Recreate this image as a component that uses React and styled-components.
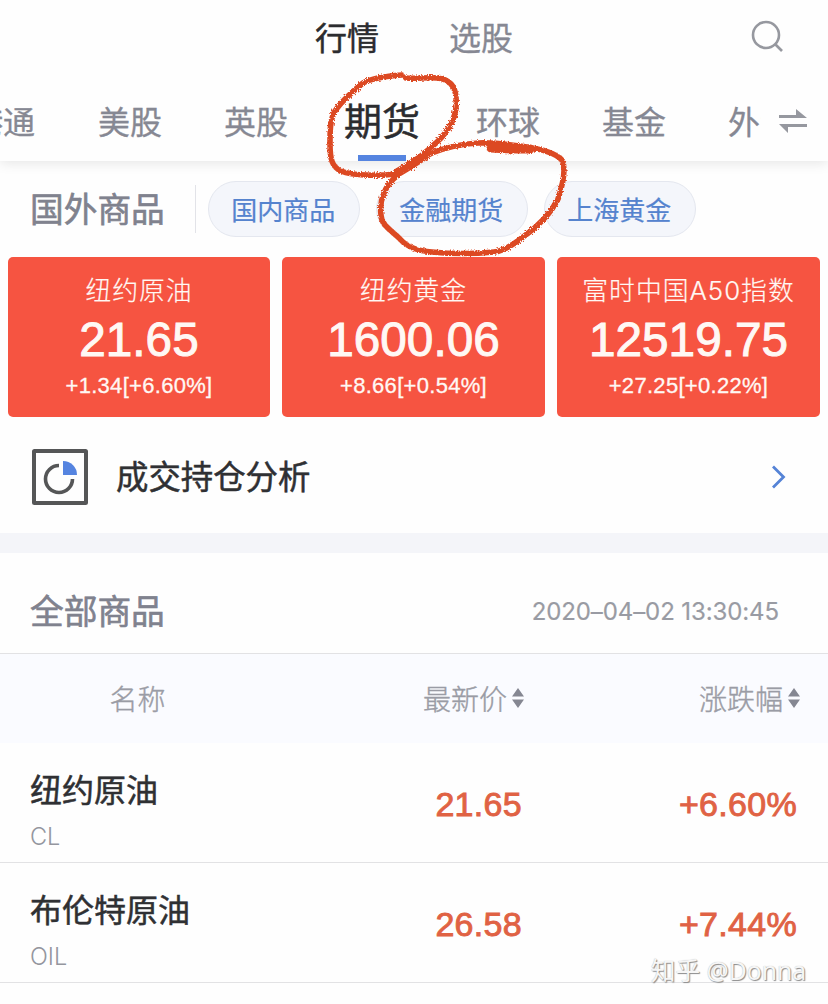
import React from "react"
import styled, { createGlobalStyle } from "styled-components"

const GlobalStyle = createGlobalStyle`
  body {
    margin: 0;
    background: #fefefe;
    overflow: hidden;
  }

  * {
    box-sizing: border-box;
  }
`

const Page = styled.div`
  position: relative;
  width: 828px;
  height: 1004px;
  overflow: hidden;
  background: #fefefe;
  color: #2f3033;
  font-family: "Noto Sans CJK SC", sans-serif;
  white-space: nowrap;
`

const TopBar = styled.header`
  height: 76px;
  display: grid;
  grid-template-columns: 1fr auto 1fr;
  align-items: center;
`

const Switcher = styled.nav`
  grid-column: 2;
  display: flex;
  gap: 70px;
  margin-top: -4px;
`

const SwitchItem = styled.span`
  font-size: 32px;
  line-height: 48px;
  -webkit-text-stroke: ${(p) => (p.$active ? "0.5px" : "0.3px")} currentColor;
  color: ${(p) => (p.$active ? "#2b2c2f" : "#868893")};
`

const SearchIcon = styled.svg`
  justify-self: end;
  margin-right: 44px;
  margin-top: -4px;
`

const TabBar = styled.nav`
  height: 85px;
  display: flex;
  align-items: center;
  box-shadow: 0 2px 12px rgba(0, 0, 0, 0.1);
  clip-path: inset(0 0 -20px 0);
`

const TabList = styled.div`
  flex: none;
  width: 761px;
  height: 85px;
  display: flex;
  overflow: hidden;
`

const Tab = styled.div`
  flex: none;
  width: 126px;
  height: 85px;
  display: flex;
  flex-direction: column;
  align-items: center;
  justify-content: space-between;
  margin-left: ${(p) => (p.$first ? "-59px" : "0")};
  padding-right: ${(p) => (p.$first ? "2px" : "0")};
  font-size: ${(p) => (p.$active ? "38px" : "32px")};
  line-height: ${(p) => (p.$active ? "86px" : "88px")};
  -webkit-text-stroke: ${(p) => (p.$active ? "0.5px" : "0.3px")} currentColor;
  color: ${(p) => (p.$active ? "#2b2c2f" : "#868893")};
`

const Underline = styled.div`
  flex: none;
  width: 48px;
  height: 6px;
  margin-top: -7px;
  background: #5584e0;
`

const SwapIcon = styled.svg`
  margin: 5px 0 0 17px;
`

const Categories = styled.section`
  height: 96px;
  display: flex;
  align-items: center;
  padding: 0 0 0 30px;
`

const SectionTitle = styled.h2`
  margin: -2px 0 0;
  font-size: 33.7px;
  line-height: 50px;
  font-weight: 400;
  color: #80828e;
  -webkit-text-stroke: 0.6px currentColor;
`

const Divider = styled.div`
  width: 1px;
  height: 48px;
  margin: 0 12px 0 30px;
  background: #e2e3e8;
`

const Chip = styled.span`
  width: 152px;
  height: 56px;
  margin-right: 16px;
  padding-right: 1px;
  border: 1px solid #e4e7ef;
  border-radius: 28px;
  background: #f4f6fb;
  color: #5583ce;
  font-size: 26px;
  line-height: 53px;
  text-align: center;
  -webkit-text-stroke: 0.2px currentColor;
`

const Cards = styled.section`
  display: grid;
  grid-template-columns: 262px 263px 263px;
  gap: 12px;
  padding: 0 8px;
`

const Card = styled.article`
  height: 160px;
  padding-top: 15px;
  border-radius: 5px;
  background: #f65441;
  color: #fff8f4;
  text-align: center;
`

const CardName = styled.div`
  font-family: Inter, "Noto Sans CJK SC", sans-serif;
  font-size: 25.8px;
  line-height: 38px;
  font-weight: 300;
  letter-spacing: 1px;
  -webkit-text-stroke: 0.2px currentColor;
`

const CardPrice = styled.div`
  font-family: "Liberation Sans", Arial, sans-serif;
  font-size: 47.7px;
  line-height: 60px;
  -webkit-text-stroke: 1px currentColor;
`

const CardChange = styled.div`
  font-family: "Liberation Sans", Arial, sans-serif;
  font-size: 22px;
  line-height: 32px;
  letter-spacing: 0.3px;
  -webkit-text-stroke: 0.3px currentColor;
`

const AnalysisRow = styled.section`
  height: 116px;
  display: flex;
  align-items: center;
  padding: 4px 42px 0 32px;
`

const AnalysisLabel = styled.span`
  flex: 1;
  margin: -4px 0 0 28px;
  font-size: 32.4px;
  line-height: 48px;
  -webkit-text-stroke: 0.5px currentColor;
`

const Band = styled.div`
  height: 20px;
  background: #f4f5f9;
`

const ListHeader = styled.section`
  height: 101px;
  display: flex;
  align-items: center;
  justify-content: space-between;
  padding: 16px 49px 0 30px;
  border-bottom: 1px solid #e2e2e4;
`

const Timestamp = styled.time`
  margin-top: 2px;
  font-family: Inter, sans-serif;
  font-size: 24px;
  line-height: 32px;
  letter-spacing: -0.1px;
  color: #999ba3;
  -webkit-text-stroke: 0.2px currentColor;
`

const TableHead = styled.div`
  height: 89px;
  display: grid;
  grid-template-columns: 333px 192px 1fr;
  align-items: center;
  padding: 0 27px 2px 0;
  background: #fafbff;
  color: #9a9ca5;
  font-size: 28px;
  line-height: 42px;
  font-weight: 300;
  -webkit-text-stroke: 0.4px currentColor;
`

const HeadCell = styled.div`
  display: flex;
  align-items: center;
  justify-content: flex-end;
  gap: 5px;
  padding-right: 1px;
`

const NameHead = styled.div`
  padding-left: 109.5px;
`

const Row = styled.div`
  height: 120px;
  display: grid;
  grid-template-columns: 333px 189px 1fr;
  align-items: center;
  padding: 3px 31px 0 30px;
  border-bottom: 1px solid #e2e2e4;

  & > :nth-child(2) {
    margin-right: 30px;
  }
`

const Name = styled.div`
  margin-top: 8px;
  font-size: 32px;
  line-height: 48px;
  -webkit-text-stroke: 0.5px currentColor;
`

const Code = styled.div`
  font-family: Inter, sans-serif;
  font-size: 23.5px;
  line-height: 32px;
  font-weight: 300;
  margin-top: 9px;
  color: #94969e;
`

const Figure = styled.div`
  font-family: "Liberation Sans", Arial, sans-serif;
  font-size: 34px;
  line-height: 40px;
  letter-spacing: 0.3px;
  text-align: right;
  color: #e06244;
  -webkit-text-stroke: 0.9px currentColor;
`

const Scribble = styled.svg`
  position: absolute;
  left: 310px;
  top: 60px;
  pointer-events: none;
`

const Watermark = styled.div`
  position: absolute;
  right: 22px;
  top: 953px;
  font-family: "Noto Sans", "Noto Sans CJK SC", sans-serif;
  font-size: 24.7px;
  line-height: 36px;
  color: #f6f6f6;
  text-shadow: 1px 1px 1px #8b8b8b, 0 0 1px #b5b5b5;
`

const tabs = ["港通", "美股", "英股", "期货", "环球", "基金", "外汇"]
const chips = ["国内商品", "金融期货", "上海黄金"]

const quotes = [
  { name: "纽约原油", price: "21.65", change: "+1.34[+6.60%]" },
  { name: "纽约黄金", price: "1600.06", change: "+8.66[+0.54%]" },
  { name: "富时中国A50指数", price: "12519.75", change: "+27.25[+0.22%]" },
]

const goods = [
  { name: "纽约原油", code: "CL", price: "21.65", percent: "+6.60%" },
  { name: "布伦特原油", code: "OIL", price: "26.58", percent: "+7.44%" },
]

const SortIcon = () => (
  <svg width="12" height="20" viewBox="0 0 12 20" fill="#858792" stroke="none">
    <path d="M6 0 12 8.500H0zM6 20 0 11.500H12z" />
  </svg>
)

const PieIcon = () => (
  <svg width="56" height="56" viewBox="0 0 56 56" fill="none">
    <rect x="2" y="2" width="52" height="52" rx="0.500" stroke="#555657" strokeWidth="4" />
    <path d="M27 16.500A13.500 13.500 0 1 0 40.500 30" stroke="#555657" strokeWidth="3.600" />
    <path d="M31 12A14 14 0 0 1 45 26H31z" fill="#5584e0" />
  </svg>
)

const Marks = () => (
  <Scribble width="270" height="200" viewBox="0 0 270 200" fill="none">
    <defs>
      <filter id="crayon" x="-5%" y="-5%" width="110%" height="110%">
        <feTurbulence type="fractalNoise" baseFrequency="0.7" numOctaves="2" seed="4" />
        <feDisplacementMap in="SourceGraphic" scale="4" />
      </filter>
    </defs>
    <g stroke="#dc4824" strokeWidth="5.600" strokeLinecap="round" filter="url(#crayon)">
      <path d="M92 15C78 16 62 18 53 23C42 32 31 42 25 51C20 59 20 71 20 84C20 99 22 107 31 111C43 116 70 116 85 114C97 109 112 95 126 83C140 70 148 54 146 37C145 24 137 19 127 18C117 17 106 19 96 18" />
      <path d="M86 114C98 108 110 99 122 93C137 87 150 84 168 83C184 82 202 85 216 87C232 89 245 93 252 100C257 110 252 127 248 139C240 155 227 167 213 177C203 185 194 191 184 192C163 194 142 194 122 192C108 191 97 187 90 179C82 171 71 165 71 155C69 140 75 125 88 115" />
      <path d="M87 113C96 108 105 102 113 97" strokeWidth="9" />
      <path d="M181 88C193 89 205 89 220 89" strokeWidth="9" />
    </g>
  </Scribble>
)

const App = () => {
  return (
    <Page>
      <GlobalStyle />
      <TopBar>
        <Switcher>
          <SwitchItem $active>行情</SwitchItem>
          <SwitchItem>选股</SwitchItem>
        </Switcher>
        <SearchIcon width="34" height="34" viewBox="0 0 34 34" fill="none" stroke="#96989f" strokeWidth="2.600">
          <circle cx="16" cy="16" r="13" />
          <path d="M25 25 32 32" />
        </SearchIcon>
      </TopBar>
      <TabBar>
        <TabList>
          {tabs.map((tab, i) => (
            <Tab key={tab} $first={i === 0} $active={tab === "期货"}>
              {tab}
              {tab === "期货" && <Underline />}
            </Tab>
          ))}
        </TabList>
        <SwapIcon width="30" height="26" viewBox="0 0 30 26" fill="#96989f">
          <path d="M1 7H18V1L29 10H1zM29 16H1L10 25V19H29z" />
        </SwapIcon>
      </TabBar>
      <Categories>
        <SectionTitle>国外商品</SectionTitle>
        <Divider />
        {chips.map((chip) => (
          <Chip key={chip}>{chip}</Chip>
        ))}
      </Categories>
      <Cards>
        {quotes.map((quote) => (
          <Card key={quote.name}>
            <CardName>{quote.name}</CardName>
            <CardPrice>{quote.price}</CardPrice>
            <CardChange>{quote.change}</CardChange>
          </Card>
        ))}
      </Cards>
      <AnalysisRow>
        <PieIcon />
        <AnalysisLabel>成交持仓分析</AnalysisLabel>
        <svg width="15" height="24" viewBox="0 0 15 24" fill="none" stroke="#5583d6" strokeWidth="2.800">
          <path d="M2 1.500 12.500 12 2 22.500" />
        </svg>
      </AnalysisRow>
      <Band />
      <ListHeader>
        <SectionTitle>全部商品</SectionTitle>
        <Timestamp>2020–04–02 13:30:45</Timestamp>
      </ListHeader>
      <TableHead>
        <NameHead>名称</NameHead>
        <HeadCell>
          最新价
          <SortIcon />
        </HeadCell>
        <HeadCell>
          涨跌幅
          <SortIcon />
        </HeadCell>
      </TableHead>
      {goods.map((item) => (
        <Row key={item.code}>
          <div>
            <Name>{item.name}</Name>
            <Code>{item.code}</Code>
          </div>
          <Figure>{item.price}</Figure>
          <Figure>{item.percent}</Figure>
        </Row>
      ))}
      <Marks />
      <Watermark>知乎 @Donna</Watermark>
    </Page>
  )
}

export default App
